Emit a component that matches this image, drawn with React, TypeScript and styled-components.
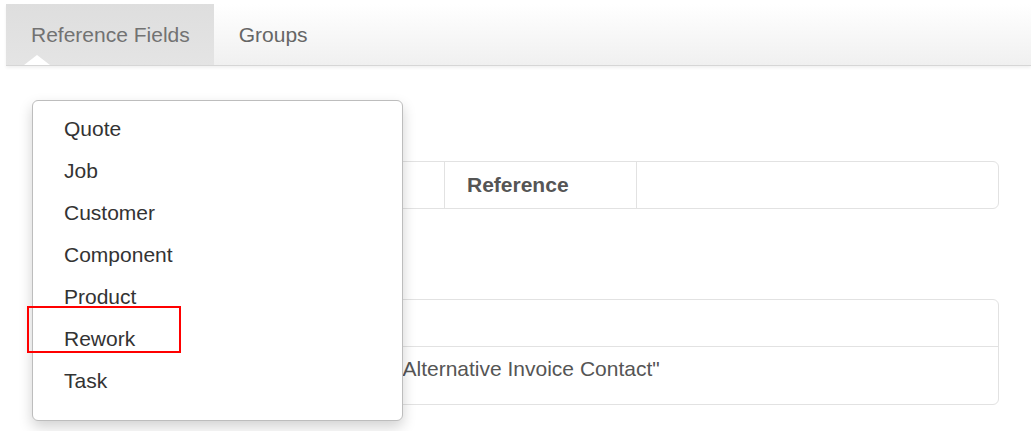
import React from "react";
import styled, { createGlobalStyle } from "styled-components";

const GlobalStyle = createGlobalStyle`
  html, body {
    margin: 0;
    padding: 0;
    background: #ffffff;
  }
  body {
    font-family: "Liberation Sans", Arial, sans-serif;
  }
`;

const menuItems = ["Quote", "Job", "Customer", "Component", "Product", "Rework", "Task"];

const App = () => {
  return (
    <Page>
      <GlobalStyle />
      <TabBar>
        <Tab active>Reference Fields</Tab>
        <Tab>Groups</Tab>
      </TabBar>
      <Content>
        <Panel>
          <Row>
            <Cell width="411px"></Cell>
            <Cell width="192px" bold>
              Reference
            </Cell>
            <Cell></Cell>
          </Row>
        </Panel>
        <Panel gap="90px">
          <Row height="46px">
            <Cell></Cell>
          </Row>
          <Row height="57px">
            <Cell width="339px"></Cell>
            <Cell top>"Alternative Invoice Contact"</Cell>
          </Row>
        </Panel>
      </Content>
      <Menu>
        {menuItems.map((item) => (
          <MenuItem key={item}>{item}</MenuItem>
        ))}
        <Highlight />
      </Menu>
    </Page>
  );
};

export default App;

const Page = styled.div`
  position: relative;
  width: 1031px;
  height: 431px;
  overflow: hidden;
  background: #ffffff;
`;

const TabBar = styled.div`
  display: flex;
  height: 61px;
  margin: 4px 0 0 6px;
  background: linear-gradient(to bottom, #ffffff 0%, #f9f9f9 40%, #f0f0f0 100%);
  border-bottom: 1px solid #d6d6d6;
  box-shadow: 0 2px 3px rgba(0, 0, 0, 0.06);
`;

const Tab = styled.div<{ active?: boolean }>`
  position: relative;
  display: flex;
  align-items: center;
  padding: 0 24px 0 25px;
  font-size: 21px;
  color: ${(p) => (p.active ? "#727272" : "#666666")};
  background: ${(p) => (p.active ? "linear-gradient(to bottom, #dedede, #e4e4e4)" : "transparent")};
  &::after {
    content: "";
    display: ${(p) => (p.active ? "block" : "none")};
    position: absolute;
    left: 18px;
    bottom: 0;
    width: 0;
    height: 0;
    border-left: 13px solid transparent;
    border-right: 13px solid transparent;
    border-bottom: 10px solid #ffffff;
  }
`;

const Content = styled.div`
  display: flex;
  flex-direction: column;
  padding: 0 32px;
`;

const Panel = styled.div<{ gap?: string }>`
  display: flex;
  flex-direction: column;
  margin-top: ${(p) => p.gap || "95px"};
  border: 1px solid #e2e2e2;
  border-radius: 6px;
  overflow: hidden;
`;

const Row = styled.div<{ height?: string }>`
  display: flex;
  height: ${(p) => p.height || "46px"};
  & + & {
    border-top: 1px solid #e2e2e2;
  }
`;

const Cell = styled.div<{ width?: string; bold?: boolean; top?: boolean }>`
  display: flex;
  align-items: ${(p) => (p.top ? "flex-start" : "center")};
  box-sizing: border-box;
  padding: ${(p) => (p.top ? "10px 22px 0" : "0 22px")};
  line-height: 24px;
  ${(p) => (p.width ? `width: ${p.width}; flex: none;` : "flex: 1;")}
  font-size: 21px;
  font-weight: ${(p) => (p.bold ? 700 : 400)};
  color: #555555;
  white-space: nowrap;
  & + & {
    border-left: 1px solid #e2e2e2;
  }
`;

const Menu = styled.div`
  position: absolute;
  left: 32px;
  top: 100px;
  width: 371px;
  height: 321px;
  box-sizing: border-box;
  padding: 7px 0 0;
  background: #ffffff;
  border: 1px solid #bdbdbd;
  border-radius: 6px;
  box-shadow: 0 6px 14px rgba(0, 0, 0, 0.18);
  display: flex;
  flex-direction: column;
`;

const MenuItem = styled.div`
  height: 42px;
  line-height: 42px;
  padding-left: 31px;
  font-size: 21px;
  color: #333333;
`;

const Highlight = styled.div`
  position: absolute;
  left: -6px;
  top: 205px;
  width: 154px;
  height: 47px;
  box-sizing: border-box;
  border: 2px solid #ff0000;
`;
